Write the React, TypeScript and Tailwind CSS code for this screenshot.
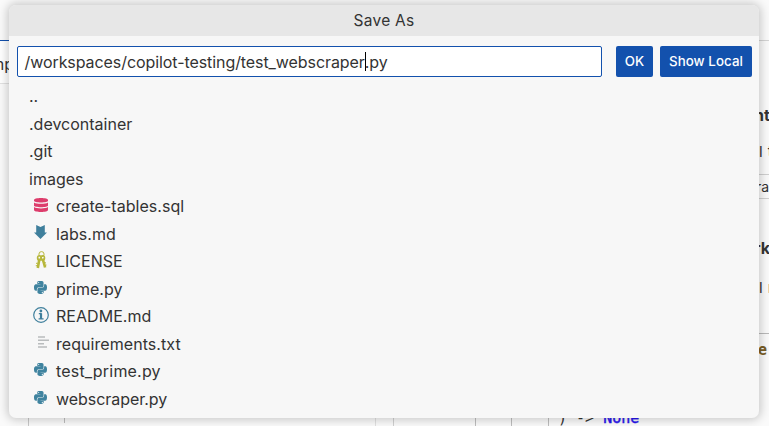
import { FaPython } from "react-icons/fa";
import type { ReactNode } from "react";

type Kind = "sql" | "md" | "license" | "python" | "info" | "text";

function FileIcon({ kind }: { kind: Kind }) {
  switch (kind) {
    case "sql":
      return (
        <svg viewBox="0 0 14 14" className="h-3.5 w-3.5" fill="#dd3d6c">
          <path d="M0 2C0 .8 3 0 7 0s7 .8 7 2v.8c0 1-3 1.700-7 1.700S0 3.800 0 2.800Z" />
          <path d="M0 4.400c1.500 1 4 1.300 7 1.300s5.500-.3 7-1.300v3.100C14 8.600 11 9.200 7 9.200S0 8.600 0 7.500Z" />
          <path d="M0 9.100c1.500 1 4 1.300 7 1.300s5.500-.3 7-1.300V12c0 1.200-3 2-7 2s-7-.8-7-2Z" />
        </svg>
      );
    case "md":
      return (
        <svg viewBox="0 0 13 14" className="mr-px h-3.5 w-[13px]" fill="#3f7f9c">
          <path d="M2.200 0 6.500 2 10.800 0v7.500H13L6.500 14 0 7.500h2.200Z" />
        </svg>
      );
    case "license":
      return (
        <svg viewBox="0 0 12 18" className="mr-px h-[18px] w-3" fill="none" stroke="#b7b73b">
          <circle cx="6.500" cy="3.200" r="2.600" strokeWidth="1" />
          <path d="M4.500 7.500 2.800 17M7.600 7.500l2.500 9" strokeWidth="2.600" />
          <ellipse cx="4.400" cy="6.900" rx="1.800" ry="2.100" strokeWidth="1.600" />
          <ellipse cx="7.700" cy="6.900" rx="1.800" ry="2.100" strokeWidth="1.600" />
          <path d="M2.800 12.300H1M2.600 14.700H.8M9 12.200l2-.5M9.500 14.500l2-.5" strokeWidth="1" />
        </svg>
      );
    case "python":
      return <FaPython className="mr-px h-[15px] w-[15px] text-[#3f839f]" />;
    case "info":
      return (
        <svg viewBox="0 0 16 16" className="h-4 w-4" fill="none" stroke="#3f7f9c">
          <circle cx="8" cy="8" r="7.300" strokeWidth="1.200" />
          <path d="M5.800 6.700h2.700M5.600 11.900h5" strokeWidth="1.300" />
          <path d="M8 6.200v5.700" strokeWidth="2.200" />
          <circle cx="7.900" cy="4" r="1.400" fill="#3f7f9c" stroke="none" />
        </svg>
      );
    case "text":
      return (
        <svg viewBox="0 0 11 12" className="ml-1 h-3 w-[11px]" stroke="#b9bcbd" strokeWidth="1.500">
          <path d="M0 1h7M0 4.300h11M0 7.700h6M0 11h9" />
        </svg>
      );
  }
}

const files: { name: string; kind: Kind; tracking: string }[] = [
  { name: "create-tables.sql", kind: "sql", tracking: "tracking-[0.03px]" },
  { name: "labs.md", kind: "md", tracking: "tracking-[0.05px]" },
  { name: "LICENSE", kind: "license", tracking: "tracking-normal" },
  { name: "prime.py", kind: "python", tracking: "tracking-normal" },
  { name: "README.md", kind: "info", tracking: "tracking-[0.05px]" },
  { name: "requirements.txt", kind: "text", tracking: "tracking-[0.06px]" },
  { name: "test_prime.py", kind: "python", tracking: "tracking-[0.19px]" },
  { name: "webscraper.py", kind: "python", tracking: "tracking-[-0.04px]" },
];

function Row({ children }: { children: ReactNode }) {
  return <li className="flex h-[27.5px] items-center whitespace-pre">{children}</li>;
}

function Editor() {
  return (
    <div className="flex h-full flex-col justify-between">
      <div className="flex justify-between">
        <div className="mt-10 flex h-11 w-[10px] justify-end overflow-hidden border-t border-b border-t-[#1351ad] border-b-[#e2e2e2] bg-white">
          <p className="-mr-[4px] pt-[11px] text-[16px] leading-6">mp</p>
        </div>
        <div className="mt-10 h-[370px] w-[11px] overflow-hidden border-t border-[#d4d4d4] whitespace-nowrap">
          <p className="-ml-1 mt-[62px] text-[16px] leading-6 font-bold">nt</p>
          <p className="mt-[13px] pl-px text-[15px] leading-6 [word-spacing:1px]">l t</p>
          <p className="-ml-[2px] mt-[10px] h-[25px] border-y border-[#d0d0d0] text-[14px] leading-[23px]">ra</p>
          <p className="-ml-[4px] mt-[37px] text-[16px] leading-6 font-bold">rk</p>
          <p className="mt-[16px] pl-px text-[15px] leading-6 [word-spacing:1px]">l r</p>
          <p className="mt-[33px] border-t border-[#b9b9b9] pt-1 font-['DejaVu_Sans_Mono',monospace] text-[15px] leading-6 font-bold text-[#795e26]">e</p>
        </div>
      </div>
      <div className="flex h-[9px] overflow-hidden">
        <i className="ml-7 h-full w-px bg-[#c8c8c8]" />
        <i className="ml-[35px] h-1.5 w-px bg-[#bdbdbd]" />
        <i className="ml-[310px] h-full w-px bg-[#e0e0e0]" />
        <i className="ml-[17px] h-full w-px bg-[#d0d0d0]" />
        <i className="ml-[81px] h-full w-px bg-[#bdbdbd]" />
        <i className="ml-[35px] h-full w-px bg-[#bdbdbd]" />
        <i className="ml-[36px] h-full w-px bg-[#bdbdbd]" />
        <pre className="-mt-[9px] ml-[9px] font-['DejaVu_Sans_Mono',monospace] text-[15px] leading-5">) -&gt; <span className="text-[#2814ed] [-webkit-text-stroke:0.4px_#2814ed]">None</span></pre>
      </div>
    </div>
  );
}

export default function App() {
  return (
    <main className="relative h-[426px] w-[769px] overflow-hidden bg-[#fafafa] font-['Inter','Liberation_Sans',sans-serif] text-[#333333]">
      <Editor />
      <section className="absolute top-[5px] left-[9px] flex h-[413px] w-[750px] flex-col overflow-hidden rounded-[7px] bg-[#f7f7f7] shadow-[0_0_10px_2px_rgba(0,0,0,0.2)]">
        <header className="flex h-[31px] shrink-0 items-center justify-center bg-[#e7e7e7] text-[15.5px] tracking-[0.25px]">Save As</header>
        <div className="mt-2.5 flex h-[31px] shrink-0 pr-[7px] pl-2">
          <div className="flex w-[585px] items-center rounded-[2px] border border-[#1351ad] bg-white pl-[6.500px] text-[16px] tracking-[-0.075px] whitespace-pre">
            <span>/workspaces/copilot-testing/test_webscraper</span>
            <i className="-mr-px h-[19px] w-px bg-black" />
            <span>.py</span>
          </div>
          <button className="ml-3.5 w-[37px] rounded-[2px] bg-[#1351ad] text-[13.3px] font-medium text-white">OK</button>
          <button className="ml-[7px] w-[92px] rounded-[2px] bg-[#1351ad] text-[13.3px] font-medium tracking-[0.08px] whitespace-nowrap text-white">Show Local</button>
        </div>
        <ul className="mt-[5.7px] pl-5 text-[16px]">
          <Row>..</Row>
          <Row>.devcontainer</Row>
          <Row>.git</Row>
          <Row>images</Row>
          {files.map((file) => (
            <Row key={file.name}>
              <span className="mr-[3px] flex w-6 justify-center pb-[3px]">
                <FileIcon kind={file.kind} />
              </span>
              <span className={file.tracking}>{file.name}</span>
            </Row>
          ))}
        </ul>
      </section>
    </main>
  );
}
